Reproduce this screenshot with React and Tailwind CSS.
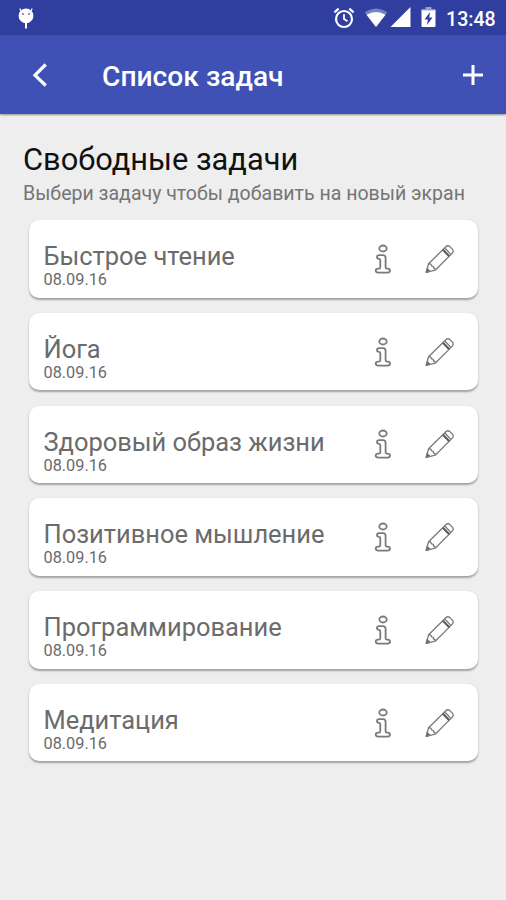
import React from "react";

const tasks = [
  "Быстрое чтение",
  "Йога",
  "Здоровый образ жизни",
  "Позитивное мышление",
  "Программирование",
  "Медитация",
];

function StatusBar() {
  return (
    <div className="flex h-[35px] shrink-0 items-center bg-[#303f9f] pr-[12px] pl-[17px] text-white">
      <svg className="mt-px h-[24px] w-[18px]" viewBox="0 0 18 24" fill="none">
        <path d="M4 5 2.8 2.5M14 5l1.2-2.5" stroke="#fff" strokeWidth="1.2" />
        <circle cx="9" cy="9.8" r="7.4" fill="#fff" />
        <path d="M9 16v6.5" stroke="#fff" strokeWidth="2" />
        <circle cx="6" cy="8" r=".9" fill="#5361b4" />
        <circle cx="12" cy="8" r=".9" fill="#5361b4" />
      </svg>
      <div className="ml-auto flex items-center pt-px">
        <svg className="h-[22px] w-[22px]" viewBox="0 0 22 22" fill="none" stroke="#fff">
          <circle cx="11" cy="12" r="8" strokeWidth="2.2" />
          <path d="M11 7.2V12l3.5 2.3" strokeWidth="1.8" />
          <path d="M1.4 5.3 5.7 1.6M20.6 5.3l-4.3-3.7" strokeWidth="2.2" />
        </svg>
        <svg className="ml-[9px] h-[22px] w-[24px]" viewBox="0 0 24 22">
          <path d="M12 20 .6 5.2Q12-2 23.4 5.2Z" fill="#fff" fillOpacity=".35" />
          <path d="M12 20 2.5 7.7Q12 2.5 21.5 7.7Z" fill="#fff" />
        </svg>
        <svg className="ml-[2px] h-[22px] w-[21px]" viewBox="0 0 21 22">
          <path d="M20.5 0v20H.5Z" fill="#fff" />
        </svg>
        <svg className="ml-[10px] h-[22px] w-[15px]" viewBox="0 0 15 22">
          <path d="M4.5 0h6v2h4v3H.5V2h4Z" fill="#fff" fillOpacity=".5" />
          <path d="M.5 3.5h14V19q0 1-1 1h-12q-1 0-1-1Z" fill="#fff" />
          <path d="M9 5 3.5 12.5h3.4L6 18l5.5-7.5H8.2Z" fill="#303f9f" />
        </svg>
        <span className="ml-[10px] w-[48px] pt-[3px] text-[19.6px] leading-[22px] font-medium whitespace-nowrap">13:48</span>
      </div>
    </div>
  );
}

function AppBar() {
  return (
    <header className="z-10 flex h-[79px] shrink-0 items-center bg-[#3f51b5] pr-[22px] pl-[32px] text-white shadow-[0_1px_2px_rgba(0,0,0,0.4)]">
      <svg className="h-[26px] w-[16px]" viewBox="0 0 16 26" fill="none">
        <path d="M13.7 2.5 3 13.2l10.7 10.3" stroke="#fff" strokeWidth="3.2" />
      </svg>
      <h1 className="mt-[5px] ml-[54px] text-[28.2px] leading-[34px] font-medium whitespace-nowrap">Список задач</h1>
      <svg className="ml-auto h-[22px] w-[22px]" viewBox="0 0 22 22">
        <path d="M11 1v20M1 11h20" stroke="#fff" strokeWidth="3" />
      </svg>
    </header>
  );
}

function InfoIcon() {
  return (
    <svg className="h-[30px] w-[18px]" viewBox="0 0 18 30" fill="none" stroke="#7a7a7a" strokeWidth="1.8">
      <ellipse cx="9" cy="4.5" rx="3.7" ry="3" />
      <path d="M5.2 11.2H9q2.6 0 2.6 2.6v9.4q0 1.4 1.4 1.4h.6q2.4 0 2.4 2t-2.4 2H4.2q-2.5 0-2.5-2t2.5-2h.6q1.5 0 1.5-1.4v-7q0-1.2-1.1-1.3-2.2-.1-2.2-1.9t2.2-1.8Z" strokeLinejoin="round" />
    </svg>
  );
}

function PencilIcon() {
  return (
    <svg className="h-[30px] w-[30px]" viewBox="0 0 30 30" fill="none" stroke="#7a7a7a" strokeWidth="1.3" strokeLinejoin="round">
      <path d="M1.2 28.3 3.6 19.8 20.8 2.7q2-1.9 4.1-.1l2.5 2.5q1.7 2-.1 4L10.2 26.2Z" />
      <path d="M3.6 19.8q2.7-.3 2.8 2 2.3-.1 2.1 2.2 2 .1 1.7 2.2" />
      <path d="M17.9 5.7 24.3 12.2" stroke="#5c5c5c" strokeWidth="2.2" />
      <path d="m19.8 4 6.1 6.4" />
      <path d="m1.2 28.3.9-3.7 2.8 2.6Z" fill="#505050" />
    </svg>
  );
}

function TaskCard({ title }) {
  return (
    <li className="flex h-[77.5px] items-center rounded-[10px] bg-white pr-[23px] pl-[14.5px] text-[#6b6b6b] shadow-[0_1.5px_2px_rgba(0,0,0,0.32)]">
      <div className="flex-1 pt-[11.5px]">
        <h3 className="text-[25.45px] leading-[30px] whitespace-nowrap">{title}</h3>
        <p className="text-[16.3px] leading-[17px]">08.09.16</p>
      </div>
      <InfoIcon />
      <div className="ml-[33px]">
        <PencilIcon />
      </div>
    </li>
  );
}

export default function App() {
  return (
    <div className="flex h-[900px] w-[506px] flex-col overflow-hidden bg-[#eee] font-[Roboto,sans-serif]">
      <StatusBar />
      <AppBar />
      <main className="px-[23px] pt-[29px]">
        <h2 className="text-[30.8px] leading-[34px] whitespace-nowrap text-[#111]">Свободные задачи</h2>
        <p className="mt-[4px] text-[19.55px] leading-[25px] whitespace-nowrap text-[#757575]">Выбери задачу чтобы добавить на новый экран</p>
        <ul className="mt-[14px] mr-[5px] ml-[6px] flex flex-col gap-[15.3px]">
          {tasks.map((title) => (
            <TaskCard key={title} title={title} />
          ))}
        </ul>
      </main>
    </div>
  );
}
